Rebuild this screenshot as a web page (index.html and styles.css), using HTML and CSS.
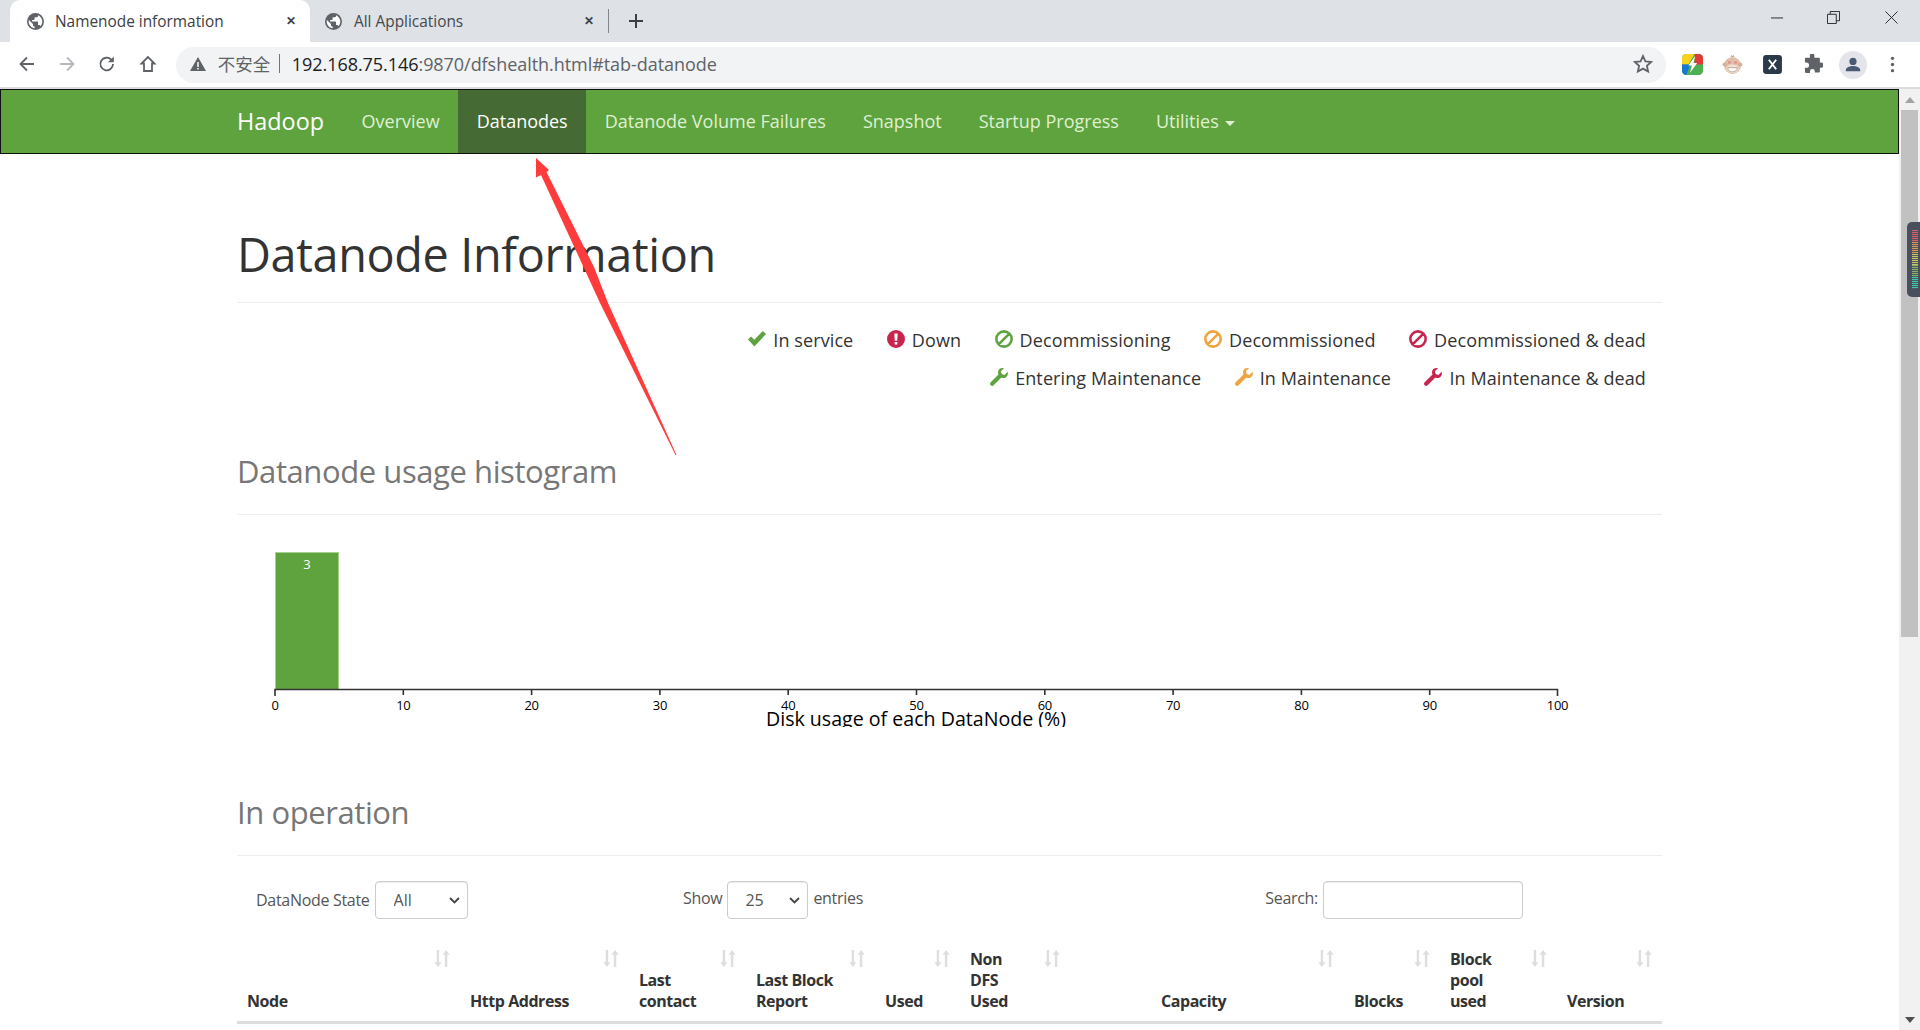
FILE: index.html
```html
<!DOCTYPE html>
<html lang="en">
<head>
<meta charset="utf-8">
<title>Namenode information</title>
<link rel="stylesheet" href="styles.css">
</head>
<body>
<svg class="defs" width="0" height="0" aria-hidden="true">
  <symbol id="globe" viewBox="0 0 16 16"><circle cx="8" cy="8" r="8" fill="#5f6368"/><path fill="#fff" d="M7.2 14.4C4.1 14 1.6 11.300 1.600 8c0-.5.1-1 .2-1.400L5.600 10.400v.8c0 .9.7 1.600 1.600 1.600zM12.700 12.400c-.2-.6-.8-1.100-1.500-1.100h-.8V8.900c0-.4-.4-.8-.8-.8H4.800V6.500h1.600c.4 0 .8-.4.800-.8V4.100h1.600c.9 0 1.600-.7 1.600-1.600v-.3c2.300.9 4 3.200 4 5.800 0 1.700-.7 3.200-1.700 4.400z"/></symbol>
  <symbol id="check" viewBox="0 0 18 16"><path fill="currentColor" d="M0 8.500 3 5.500l3.300 3.300L14.800 0 18 3 6.400 15.500z"/></symbol>
  <symbol id="exclaim" viewBox="0 0 16 16"><path fill="currentColor" fill-rule="evenodd" d="M8 0a8 8 0 1 1 0 16A8 8 0 0 1 8 0zM6.500 3l.4 6.500h2.200L9.500 3zM6.800 10.600v2.300h2.400v-2.300z"/></symbol>
  <symbol id="ban" viewBox="0 0 16 16"><path fill="none" stroke="currentColor" stroke-width="2.300" d="M8 1.200a6.800 6.800 0 1 1 0 13.600A6.800 6.800 0 0 1 8 1.200zM3.200 12.800 12.800 3.200"/></symbol>
  <symbol id="wrench" viewBox="0 0 18 18"><path fill="currentColor" d="M17.600 3.800 14.500 6.900 11.700 6 10.900 3.200 14 .3C11.800-.4 9.400.3 8.500 2.300 7.800 3.700 7.900 5.300 8.500 6.500L.7 14.300c-.9.900-.9 2.100 0 2.900.9.900 2.100.9 2.900 0l7.800-7.800c1.300.7 2.900.7 4.200 0 2-1 2.700-3.300 2-5.600z"/></symbol>
  <symbol id="sort" viewBox="0 0 15 16"><path fill="currentColor" d="M2.500 0h2.300v11.500H7L3.600 16 .2 11.500h2.300zM10.200 16h2.300V4.500h2.300L11.400 0 8 4.500h2.200z"/></symbol>
</svg>

<header class="browser">
  <div class="tabstrip">
    <div class="tab tab-active">
      <svg class="favicon"><use href="#globe"/></svg>
      <span class="tab-title">Namenode information</span>
      <span class="tab-close">✕</span>
    </div>
    <div class="tab tab-idle">
      <svg class="favicon"><use href="#globe"/></svg>
      <span class="tab-title">All Applications</span>
      <span class="tab-close">✕</span>
    </div>
    <span class="tab-sep"></span>
    <svg class="newtab" viewBox="0 0 16 16"><path d="M8 1v14M1 8h14"/></svg>
    <div class="window-controls">
      <svg class="wc wc-min" viewBox="0 0 14 14"><path d="M0 7.500h13"/></svg>
      <svg class="wc" viewBox="0 0 14 14"><path d="M.5 3.500h9.500v10H.5zM3.500 3.500V.5h10v10H10"/></svg>
      <svg class="wc" viewBox="0 0 14 14"><path d="M.5.5l13 13M13.500.5l-13 13"/></svg>
    </div>
  </div>
  <div class="toolbar">
    <svg class="tb-icon" viewBox="0 0 20 20"><path class="stroke" d="M17 10H4M10 3.500 3.500 10l6.500 6.500"/></svg>
    <svg class="tb-icon tb-off" viewBox="0 0 20 20"><path class="stroke" d="M3 10h13M10 3.500l6.500 6.500-6.500 6.500"/></svg>
    <svg class="tb-icon" viewBox="0 0 20 20"><path class="stroke" d="M16 10a6.300 6.300 0 1 1-1.800-4.400"/><path class="fill" d="M16.800 2.500v5.800H11z"/></svg>
    <svg class="tb-icon" viewBox="0 0 20 20"><path class="stroke" d="M10 3 3.500 9.500H6V17h8V9.500h2.500z"/></svg>
    <div class="omnibox">
      <svg class="warn" viewBox="0 0 16 16"><path fill="#5f6368" fill-rule="evenodd" d="M8 1 16 15H0zM7.200 6v5h1.600V6zM7.200 12v1.500h1.600V12z"/></svg>
      <span class="insecure">不安全</span>
      <span class="omni-sep"></span>
      <span class="url"><b>192.168.75.146</b>:9870/dfshealth.html#tab-datanode</span>
      <svg class="star" viewBox="0 0 20 20"><path d="M10 2l2.400 5.300 5.800.6-4.300 3.900 1.200 5.700-5.100-2.900-5.100 2.900 1.200-5.700L1.800 7.900l5.800-.6z"/></svg>
    </div>
    <div class="extensions">
      <svg class="ext" viewBox="0 0 20 20"><rect width="20" height="20" rx="4" fill="#4caf50"/><path fill="#f7d31e" d="M4 0h8L6 10H0V4a4 4 0 0 1 4-4z"/><path fill="#e53935" d="M12 0h4a4 4 0 0 1 4 4v6h-8z"/><path fill="#1976d2" d="M0 10h8l-4 10a4 4 0 0 1-4-4z"/><path fill="#fff" d="M12.500 2 6 11h3.500L7.500 18 14.500 8.500H11z"/></svg>
      <svg class="ext" viewBox="0 0 20 20"><circle cx="10" cy="11" r="8" fill="#e0bfa8"/><circle cx="2.500" cy="10" r="2" fill="#d3b09a"/><circle cx="17.500" cy="10" r="2" fill="#d3b09a"/><path fill="#c4aaa0" d="M8 3l1-2 1 1 1-1 1 2z"/><ellipse cx="10" cy="14" rx="6" ry="4" fill="#f3e2d4"/><circle cx="7" cy="8" r="1.300" fill="#ee8a8a"/><circle cx="13" cy="8" r="1.300" fill="#ee8a8a"/><path fill="#fff" stroke="#9a806e" stroke-width=".6" d="M5.500 13h9c0 3-2 4-4.500 4s-4.500-1-4.500-4z"/></svg>
      <svg class="ext ext-x" viewBox="0 0 20 20"><rect x="1" y="1" width="18" height="18" rx="3" fill="#2b3a48"/><path stroke="#fff" stroke-width="1.800" fill="none" d="M6.500 5.500l7 9M13.500 5.500l-7 9"/></svg>
      <svg class="ext" viewBox="0 0 20 20"><path fill="#5f6368" d="M7.500 1a2.200 2.200 0 0 1 4.300.6V3.500H16a1 1 0 0 1 1 1v3.700h1.200a2.400 2.400 0 0 1 0 4.800H17v3.700a1 1 0 0 1-1 1h-3.800v-1.200a2.300 2.300 0 0 0-4.600 0V18H3.800a1 1 0 0 1-1-1v-3.800h1.300a2.600 2.600 0 0 0 0-5.200H2.800V4.500a1 1 0 0 1 1-1h3.700z"/></svg>
      <span class="avatar"><svg viewBox="0 0 20 20"><circle cx="10" cy="6" r="4" fill="#4a5a75"/><path fill="#4a5a75" d="M2 17v-1.500c0-3 5-4.500 8-4.500s8 1.500 8 4.500V17z"/></svg></span>
      <svg class="dots" viewBox="0 0 4 18"><circle cx="2" cy="2.500" r="1.800"/><circle cx="2" cy="9" r="1.800"/><circle cx="2" cy="15.500" r="1.800"/></svg>
    </div>
  </div>
</header>

<div class="viewport">
  <div class="page">
    <nav class="navbar">
      <a class="brand">Hadoop</a>
      <a class="nav-link">Overview</a>
      <a class="nav-link nav-active">Datanodes</a>
      <a class="nav-link">Datanode Volume Failures</a>
      <a class="nav-link">Snapshot</a>
      <a class="nav-link">Startup Progress</a>
      <a class="nav-link">Utilities <span class="caret"></span></a>
    </nav>
    <main class="container">
      <h1 class="title">Datanode Information</h1>
      <div class="legend">
        <div class="legend-row">
          <span class="li c-green"><svg class="li-check"><use href="#check"/></svg><span>In service</span></span>
          <span class="li c-red"><svg class="li-ic"><use href="#exclaim"/></svg><span>Down</span></span>
          <span class="li c-green"><svg class="li-ic"><use href="#ban"/></svg><span>Decommissioning</span></span>
          <span class="li c-orange"><svg class="li-ic"><use href="#ban"/></svg><span>Decommissioned</span></span>
          <span class="li c-red"><svg class="li-ic"><use href="#ban"/></svg><span>Decommissioned &amp; dead</span></span>
        </div>
        <div class="legend-row">
          <span class="li c-green"><svg class="li-ic"><use href="#wrench"/></svg><span>Entering Maintenance</span></span>
          <span class="li c-orange"><svg class="li-ic"><use href="#wrench"/></svg><span>In Maintenance</span></span>
          <span class="li c-red"><svg class="li-ic"><use href="#wrench"/></svg><span>In Maintenance &amp; dead</span></span>
        </div>
      </div>
      <h2 class="section section-hist">Datanode usage histogram</h2>
      <svg class="hist" width="1424" height="198" viewBox="237 529 1424 198">
        <rect class="bar" x="275.500" y="552.500" width="63" height="137"/>
        <text class="bar-label" x="307" y="569">3</text>
        <path class="axis" d="M275 696v-6.500H1557.500v6.500M403.300 689v6M531.600 689v6M659.900 689v6M788.200 689v6M916.500 689v6M1044.800 689v6M1173.100 689v6M1301.400 689v6M1429.700 689v6"/>
        <g class="ticks">
          <text x="275" y="710">0</text><text x="403.300" y="710">10</text><text x="531.600" y="710">20</text><text x="659.900" y="710">30</text><text x="788.200" y="710">40</text><text x="916.500" y="710">50</text><text x="1044.800" y="710">60</text><text x="1173.100" y="710">70</text><text x="1301.400" y="710">80</text><text x="1429.700" y="710">90</text><text x="1557.500" y="710">100</text>
        </g>
        <text class="axis-title" x="916" y="726">Disk usage of each DataNode (%)</text>
      </svg>
      <h2 class="section section-op">In operation</h2>
      <div class="filters">
        <label class="f-state">DataNode State
          <select class="ctl ctl-state"><option>All</option></select>
        </label>
        <label class="f-show">Show
          <select class="ctl ctl-show"><option>25</option></select>
          entries
        </label>
        <label class="f-search">Search:
          <input class="ctl ctl-search" type="text">
        </label>
      </div>
      <table class="nodes">
        <thead>
          <tr>
            <th class="w1">Node<svg class="sort"><use href="#sort"/></svg></th>
            <th class="w2">Http Address<svg class="sort"><use href="#sort"/></svg></th>
            <th class="w3">Last<br>contact<svg class="sort"><use href="#sort"/></svg></th>
            <th class="w4">Last Block<br>Report<svg class="sort"><use href="#sort"/></svg></th>
            <th class="w5">Used<svg class="sort"><use href="#sort"/></svg></th>
            <th class="w6">Non<br>DFS<br>Used<svg class="sort"><use href="#sort"/></svg></th>
            <th class="w7">Capacity<svg class="sort"><use href="#sort"/></svg></th>
            <th class="w8">Blocks<svg class="sort"><use href="#sort"/></svg></th>
            <th class="w9">Block<br>pool<br>used<svg class="sort"><use href="#sort"/></svg></th>
            <th class="w10">Version<svg class="sort"><use href="#sort"/></svg></th>
          </tr>
        </thead>
      </table>
    </main>
  </div>
  <aside class="scrollbar">
    <span class="sb-up"></span>
    <span class="sb-thumb"></span>
    <span class="sb-down"></span>
  </aside>
</div>

<div class="meter"><i class="m1"></i><i class="m2"></i><i class="m3"></i><i class="m4"></i><i class="m5"></i></div>
<svg class="arrow" width="1920" height="1030" viewBox="0 0 1920 1030" aria-hidden="true"><path d="M536 158 549 170 546.500 172 594 267 608 303 676.500 455 675.500 455 600 303 583.500 267 541 175 536 177.500z"/></svg>
</body>
</html>
```
FILE: styles.css
```css
* { box-sizing: border-box; }
html, body { margin: 0; height: 1030px; overflow: hidden; background: #fff; }
body { font-family: "Open Sans", "Noto Sans CJK SC", sans-serif; color: #333; position: relative; }
.defs { position: absolute; }

/* browser chrome */
.browser { height: 89px; display: flex; flex-direction: column; }
.tabstrip { height: 42px; background: #dee1e6; display: flex; align-items: stretch; padding-left: 10px; }
.tab { width: 300px; height: 42px; display: flex; align-items: center; font-size: 15.400px; color: #3c4043; }
.tab-active { background: #fff; border-radius: 10px 10px 0 0; padding: 0 14px 0 17px; }
.tab-idle { padding: 0 16px 0 15px; }
.favicon { width: 17px; height: 17px; flex: none; margin-right: 11px; }
.tab-idle .favicon { margin-right: 12px; }
.tab-title { flex: 1; white-space: nowrap; }
.tab-idle .tab-title { color: #45484c; }
.tab-close { font-size: 12px; font-weight: 700; color: #3c4043; line-height: 1; }
.tab-sep { width: 1px; height: 24px; background: #80868b; align-self: center; margin: 0 19px 0 -2px; }
.newtab { width: 16px; height: 16px; align-self: center; fill: none; stroke: #3c4043; stroke-width: 2; }
.window-controls { margin-left: auto; display: flex; align-items: flex-start; padding-top: 11px; gap: 45px; padding-right: 22px; }
.wc { width: 13px; height: 13px; fill: none; stroke: #202124; stroke-width: 1; }
.wc-min { margin-right: -2px; }
.toolbar { height: 47px; background: #fff; border-bottom: 2px solid #dadce0; display: flex; align-items: center; padding: 0 0 1px 17px; }
.tb-icon { width: 20px; height: 20px; margin-right: 20.200px; flex: none; }
.tb-icon .stroke, .tb-icon { fill: none; stroke: #5f6368; stroke-width: 1.800; }
.tb-icon .fill { fill: #5f6368; stroke: none; }
.tb-off .stroke { stroke: #b5b8bc; }
.omnibox { width: 1490px; height: 36px; margin: 1px 0 0 -2px; background: #f1f3f4; border-radius: 18px; display: flex; align-items: center; padding: 0 13px 2px 14px; font-size: 18px; color: #5f6368; white-space: nowrap; }
.warn { width: 16px; height: 16px; flex: none; margin-right: 12px; }
.insecure { font-size: 17.500px; width: 53px; }
.omni-sep { width: 1px; height: 19px; background: #70757a; margin: 0 12px 0 8px; }
.url { flex: 1; letter-spacing: -.05px; }
.url b { font-weight: 400; color: #202124; }
.star { width: 20px; height: 20px; fill: none; stroke: #5f6368; stroke-width: 1.800; }
.extensions { flex: 1; display: flex; align-items: center; padding-left: 16px; margin-top: 1px; }
.ext { width: 21px; height: 21px; margin-right: 19px; flex: none; }
.avatar { width: 28px; height: 28px; border-radius: 50%; background: #e3e5ea; display: flex; align-items: center; justify-content: center; margin-left: -3px; flex: none; }
.avatar svg { width: 18px; height: 18px; }
.dots { width: 5px; height: 17px; fill: #5f6368; margin-left: 23px; flex: none; }

/* page */
.viewport { height: 941px; display: flex; overflow: hidden; }
.page { width: 1899px; flex: none; overflow: hidden; }
.navbar { height: 65px; background: #5fa33e; border: 1px solid #101010; display: flex; align-items: stretch; padding-left: 236px; font-size: 18px; }
.brand { color: #fff; font-size: 23.400px; line-height: 63px; margin-right: 19.100px; }
.nav-link { color: #dff0d3; line-height: 63px; padding: 0 18.500px; white-space: nowrap; }
.nav-active { background: #466a34; color: #fff; }
.caret { display: inline-block; width: 0; height: 0; margin-left: 2px; vertical-align: middle; border-top: 5px solid #dff0d3; border-left: 5px solid transparent; border-right: 5px solid transparent; }
.container { width: 1425px; margin-left: 237px; }
.title { margin: 0; height: 149px; padding-top: 67px; border-bottom: 1px solid #eee; font-size: 46.800px; line-height: 66px; font-weight: 400; color: #333; letter-spacing: -.36px; white-space: nowrap; }
.legend { padding: 18px 16px 0 0; font-size: 18px; letter-spacing: .1px; }
.legend-row { height: 38px; display: flex; justify-content: flex-end; gap: 33.500px; align-items: center; white-space: nowrap; }
.li { display: flex; align-items: center; gap: 7px; }
.li span { color: #333; }
.li-ic { width: 18px; height: 18px; margin-top: -3px; }
.li-check { width: 18px; height: 16px; margin-top: -2px; }
.c-green { color: #5fa341; }
.c-orange { color: #f0a33e; }
.c-red { color: #c7254e; }
.section { margin: 0; border-bottom: 1px solid #eee; font-size: 31px; font-weight: 400; color: #777; line-height: 40px; letter-spacing: -.42px; }
.section-hist { height: 118px; padding-top: 54px; }
.hist { display: block; margin-top: 14px; overflow: hidden; }
.bar { fill: #5fa33e; stroke: #a8d08f; stroke-width: 1; }
.bar-label { fill: #fff; font-size: 13px; text-anchor: middle; }
.axis { fill: none; stroke: #333; stroke-width: 1.600; }
.ticks text { font-size: 13px; text-anchor: middle; fill: #000; letter-spacing: -.3px; }
.axis-title { font-size: 19.600px; text-anchor: middle; fill: #000; }
.section-op { height: 129px; padding-top: 65px; }
.filters { display: grid; grid-template-columns: 427px 1fr auto; padding: 25px 139px 0 19px; font-size: 16px; letter-spacing: -.3px; color: #555; height: 64px; }
.f-state { display: flex; align-items: center; gap: 5px; height: 38px; }
.f-show, .f-search { display: flex; align-items: center; gap: 5px; height: 34px; }
.f-search input, .f-show select { margin-top: 4px; }
.ctl { height: 38px; border: 1px solid #ccc; border-radius: 4px; background: #fff; font: inherit; color: #555; box-shadow: inset 0 1px 1px rgba(0,0,0,.075); }
select.ctl { appearance: none; background: #fff url("data:image/svg+xml,%3Csvg xmlns='http://www.w3.org/2000/svg' width='11' height='7'%3E%3Cpath d='M1 1l4.500 4.500L10 1' fill='none' stroke='%23444' stroke-width='1.800'/%3E%3C/svg%3E") no-repeat right 7px center; }
.ctl-state { width: 93px; padding-left: 18px; }
.ctl-show { width: 81px; padding-left: 17px; }
.ctl-search { width: 200px; }
.nodes { width: 1425px; table-layout: fixed; border-collapse: collapse; margin-top: 27px; }
.nodes th { position: relative; vertical-align: bottom; text-align: left; padding: 0 10px 9px; font-size: 16px; line-height: 21px; font-weight: 700; color: #333; border-bottom: 3px solid #ddd; height: 75px; letter-spacing: -.45px; }
.sort { position: absolute; right: 10px; top: 3px; width: 16px; height: 17px; color: #dedede; }
.w1 { width: 223px; } .w2 { width: 169px; } .w3 { width: 117px; } .w4 { width: 129px; } .w5 { width: 85px; }
.w6 { width: 110px; } .nodes th.w7 { width: 274px; padding-left: 91px; } .w8 { width: 96px; } .w9 { width: 117px; } .w10 { width: 105px; }

/* scrollbar */
.scrollbar { flex: 1; background: #f1f1f1; display: flex; flex-direction: column; align-items: center; }
.sb-up { margin-top: 8px; border-left: 5px solid transparent; border-right: 5px solid transparent; border-bottom: 6px solid #a3a3a3; }
.sb-thumb { width: 17px; height: 527px; margin-top: 7px; background: #c1c1c1; }
.sb-down { margin-top: auto; margin-bottom: 7px; border-left: 5px solid transparent; border-right: 5px solid transparent; border-top: 6px solid #505050; }

/* overlays */
.meter { position: absolute; left: 1907px; top: 222px; width: 13px; height: 75px; background: #4a4f5e; border-radius: 5px 0 0 5px; padding: 8px 2px 8px 5px; display: flex; flex-direction: column; }
.meter i { flex: 1; display: block; background-size: 100% 4px; background-image: repeating-linear-gradient(transparent 0 1px, rgba(74,79,94,.9) 1px 2px); }
.m1 { background-color: #d9606a; }
.m2 { background-color: #d69a55; }
.m3 { background-color: #c9c561; }
.m4 { background-color: #84b568; }
.m5 { background-color: #3fc9a7; }
.arrow { position: absolute; left: 0; top: 0; pointer-events: none; }
.arrow path { fill: #ff3b3b; }
```
